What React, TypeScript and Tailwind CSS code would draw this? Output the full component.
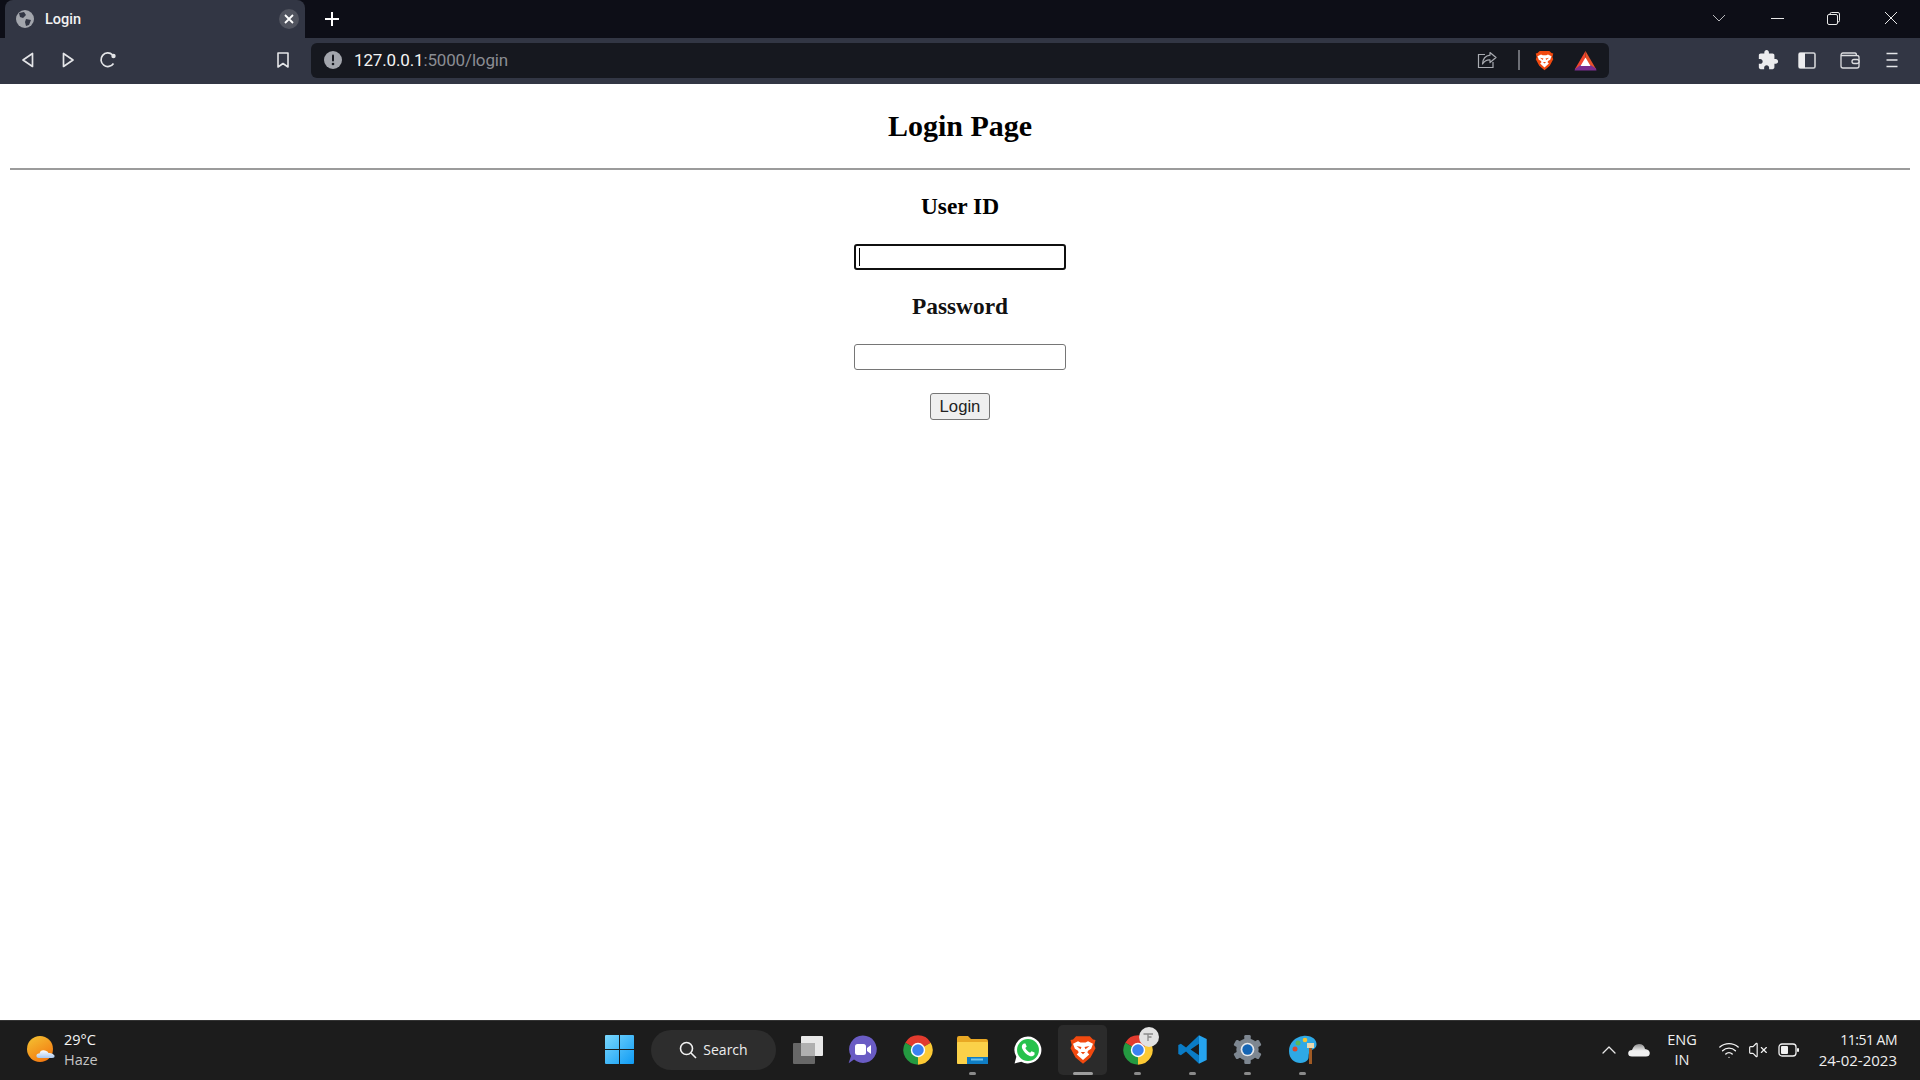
import React from "react";
import { ChevronUp, VolumeX, Wifi } from "lucide-react";

function Brave({ size }: { size: number }) {
  return (
    <svg width={size} height={size} viewBox="0 0 24 24">
      <path d="M6.5 1 H17.5 L20 3.5 L22 4 L21 8 L22 10.5 L18 18 L12 23 L6 18 L2 10.5 L3 8 L2 4 L4 3.5 Z" fill="#f1490f" />
      <path d="M4 7 L8 5 L10 6 H14 L16 5 L20 7 L18.5 11 L16 12.5 L15.5 14 L17 15.5 L12 20 L7 15.5 L8.5 14 L8 12.5 L5.5 11 Z" fill="#fff" />
      <path d="M6.8 8.8 L10.8 9.6 L10 11.4 Z M17.2 8.8 L13.2 9.6 L14 11.4 Z M10.2 13.6 H13.8 L12 15.4 Z" fill="#f1490f" />
    </svg>
  );
}

function Bat() {
  return (
    <svg width="23" height="21" viewBox="0 0 23 21">
      <path d="M11.5 1 L1 19 H6.5 L11.5 10 Z" fill="#f2452d" />
      <path d="M11.5 1 L22 19 H16.5 L11.5 10 Z" fill="#e8512a" />
      <path d="M1 19 L0.5 20.5 H22.5 L22 18.5 L16.5 15 H6.5 Z" fill="#7b2f8f" />
      <path d="M11.5 7.5 L16.5 16 H6.5 Z" fill="#fff" />
    </svg>
  );
}

function Chrome({ size }: { size: number }) {
  return (
    <svg width={size} height={size} viewBox="0 0 24 24">
      <path d="M12 12 L2.47 6.5 A11 11 0 0 1 21.53 6.5 Z" fill="#e33b2e" />
      <path d="M12 12 L21.53 6.5 A11 11 0 0 1 12 23 Z" fill="#fcc934" />
      <path d="M12 12 L12 23 A11 11 0 0 1 2.47 6.5 Z" fill="#249a41" />
      <circle cx="12" cy="12" r="5.4" fill="#fff" />
      <circle cx="12" cy="12" r="4.3" fill="#3b82f0" />
    </svg>
  );
}

function TaskIcon({ children, pill, active }: { children: React.ReactNode; pill?: boolean; active?: boolean }) {
  return (
    <div className="relative flex h-full w-[55px] items-center justify-center">
      {active && <div className="absolute left-[3px] top-[4px] h-[50px] w-[49px] rounded-[5px] bg-[#2b2b2b]" />}
      <div className="relative flex items-center justify-center">{children}</div>
      {pill && (
        <div className={`absolute top-[51px] h-[3px] rounded-full ${active ? "w-[20px] bg-[#9d9d9d]" : "w-[7px] bg-[#8a8a8a]"}`} />
      )}
    </div>
  );
}

export default function App() {
  return (
    <div className="flex h-[1080px] w-[1920px] flex-col overflow-hidden bg-white font-['Roboto',sans-serif]">
      {/* tab strip */}
      <div className="flex h-[38px] items-end bg-[#0d0e17] text-white">
        <div className="ml-[5px] flex h-[38px] w-[300px] items-center rounded-t-[8px] bg-[#323644] pl-[11px]">
          <svg width="18" height="18" viewBox="0 0 18 18">
            <circle cx="9" cy="9" r="9" fill="#a3a6ad" />
            <path d="M3 3 L8 2 L10 5 L7 8 L4 7 Z M10 9 L15 10 L13 15 L10 16 L9 12 Z" fill="#323644" />
          </svg>
          <span className="ml-[11px] pt-px text-[14.5px] font-medium text-[#f2f2f2]">Login</span>
          <div className="ml-auto mr-[6px] flex h-[20px] w-[20px] items-center justify-center rounded-full bg-[#51545f]">
            <svg width="10" height="10" viewBox="0 0 10 10">
              <path d="M1 1 L9 9 M9 1 L1 9" stroke="#fff" strokeWidth="1.8" />
            </svg>
          </div>
        </div>
        <div className="ml-[19px] flex h-[38px] w-[16px] items-center justify-center">
          <svg width="16" height="16" viewBox="0 0 16 16">
            <path d="M8 1 V15 M1 8 H15" stroke="#fff" strokeWidth="2" />
          </svg>
        </div>
        <div className="ml-auto flex h-[36px] items-center self-start">
          <svg width="14" height="8" viewBox="0 0 14 8" className="mr-[45px]">
            <path d="M1 1 L7 7 L13 1" stroke="#b8b8bc" fill="none" />
          </svg>
          <div className="mr-[43px] h-px w-[13px] bg-[#e8e8e8]" />
          <svg width="13" height="13" viewBox="0 0 13 13" className="mr-[44px]">
            <path d="M3 2.5 V2 Q3 0.5 4.5 0.5 H11 Q12.5 0.5 12.5 2 V8.5 Q12.5 10 11 10" stroke="#e8e8e8" fill="none" />
            <rect x="0.5" y="2.5" width="10" height="10" rx="1.5" stroke="#e8e8e8" fill="none" />
          </svg>
          <svg width="14" height="14" viewBox="0 0 14 14" className="mr-[22px]">
            <path d="M1 1 L13 13 M13 1 L1 13" stroke="#e8e8e8" />
          </svg>
        </div>
      </div>

      {/* toolbar */}
      <div className="flex h-[46px] items-center bg-[#323644] pb-[2px] pl-[18px]">
        <svg width="20" height="20" viewBox="0 0 20 20">
          <path d="M14.5 3.5 V16.5 L5 10 Z" fill="none" stroke="#e4e5e8" strokeWidth="1.7" strokeLinejoin="round" />
        </svg>
        <svg width="20" height="20" viewBox="0 0 20 20" className="ml-[20px]">
          <path d="M5.5 3.5 V16.5 L15 10 Z" fill="none" stroke="#e4e5e8" strokeWidth="1.7" strokeLinejoin="round" />
        </svg>
        <svg width="20" height="20" viewBox="0 0 20 20" className="ml-[20px]">
          <path d="M15.5 13.5 A6.8 6.8 0 1 1 14.5 4.8" fill="none" stroke="#e4e5e8" strokeWidth="1.7" />
          <circle cx="15.5" cy="6" r="2.2" fill="#e4e5e8" />
        </svg>
        <svg width="20" height="20" viewBox="0 0 20 20" className="ml-[155px]">
          <path d="M5 3 H15 V17 L10 13.5 L5 17 Z" fill="none" stroke="#e4e5e8" strokeWidth="1.6" strokeLinejoin="round" />
        </svg>

        <div className="ml-[18px] flex h-[35px] w-[1298px] items-center rounded-[6px] bg-[#16181f] pl-[13px] pr-[12px]">
          <svg width="18" height="18" viewBox="0 0 18 18">
            <circle cx="9" cy="9" r="9" fill="#a3a6ad" />
            <rect x="8" y="3.5" width="2" height="7" rx="1" fill="#16181f" />
            <circle cx="9" cy="13" r="1.3" fill="#16181f" />
          </svg>
          <span className="ml-[12px] pt-[2px] text-[17px] tracking-[-0.15px] text-[#f4f4f4]">
            127.0.0.1<span className="text-[#8b8d93]">:5000/login</span>
          </span>
          <svg width="20" height="20" viewBox="0 0 20 20" className="ml-auto">
            <path d="M8 4.5 H1.5 V17.5 H16 V12" fill="none" stroke="#a9abb1" strokeWidth="1.2" />
            <path d="M13 2.5 L19 7.5 L13 12.5 V9.8 Q8 9.5 5.5 14 Q6 6 13 5.2 Z" fill="none" stroke="#a9abb1" strokeWidth="1.2" strokeLinejoin="round" />
          </svg>
          <div className="ml-[21px] h-[20px] w-[2px] bg-[#6d6f76]" />
          <div className="ml-[14px]">
            <Brave size={21} />
          </div>
          <div className="ml-[19px]">
            <Bat />
          </div>
        </div>

        <svg width="22" height="22" viewBox="0 0 24 24" className="ml-[148px]">
          <path
            d="M20.5 11H19V7c0-1.1-.9-2-2-2h-4V3.5C13 2.12 11.88 1 10.5 1S8 2.12 8 3.5V5H4c-1.1 0-1.99.9-1.99 2v3.8H3.5c1.49 0 2.7 1.21 2.7 2.7s-1.21 2.7-2.7 2.7H2V20c0 1.1.9 2 2 2h3.8v-1.5c0-1.49 1.21-2.7 2.7-2.7 1.49 0 2.7 1.21 2.7 2.7V22H17c1.1 0 2-.9 2-2v-4h1.5c1.38 0 2.5-1.12 2.5-2.5S21.88 11 20.5 11z"
            fill="#ececee"
          />
        </svg>
        <svg width="18" height="17" viewBox="0 0 18 17" className="ml-[19px]">
          <rect x="1" y="1" width="16" height="15" rx="1.5" fill="none" stroke="#d4d5d8" strokeWidth="1.6" />
          <rect x="1" y="1" width="6" height="15" fill="#ececee" />
        </svg>
        <svg width="20" height="17" viewBox="0 0 20 17" className="ml-[24px]">
          <path d="M3 1 H15 Q16.5 1 16.5 3.5 M1 3.5 Q1 1 3 1 M1 3.5 V14 Q1 16 3 16 H17 Q19 16 19 14 V5.5 Q19 3.5 17 3.5 H1" fill="none" stroke="#dcdde0" strokeWidth="1.3" />
          <rect x="12" y="7.5" width="7" height="4" rx="2" fill="#323644" stroke="#dcdde0" strokeWidth="1.3" />
        </svg>
        <svg width="12" height="16" viewBox="0 0 12 16" className="ml-[26px]">
          <path d="M0.5 1.5 H11.5 M0.5 8 H11.5 M0.5 14.5 H11.5" stroke="#e4e5e8" strokeWidth="1.5" />
        </svg>
      </div>

      {/* page */}
      <main className="flex flex-1 flex-col items-center px-[10px] font-['Liberation_Serif',serif] text-black">
        <h1 className="mt-[25px] h-[34px] text-center text-[30px] font-bold leading-[34px]">Login Page</h1>
        <hr className="mt-[25px] h-[2px] w-full border-0 bg-[#9b9b9b]" />
        <h3 className="mt-[25px] h-[24px] text-center text-[23.4px] font-bold leading-[22px]">User ID</h3>
        <div className="relative mt-[25px]">
          <input className="block h-[26px] w-[212px] rounded-[3px] border-2 border-[#101010] bg-white outline-none" />
          <div className="absolute left-[5px] top-[4px] h-[18px] w-px bg-black" />
        </div>
        <h3 className="mt-[25px] h-[24px] text-center text-[23.4px] font-bold leading-[22px] text-[#111]">Password</h3>
        <input type="password" className="mt-[25px] block h-[26px] w-[212px] rounded-[3px] border border-[#767676] bg-white outline-none" />
        <button className="mt-[23px] h-[27px] w-[60px] rounded-[3px] border border-[#767676] bg-[#efefef] pt-px font-['Liberation_Sans',sans-serif] text-[16.67px] leading-none text-[#222]">
          Login
        </button>
      </main>

      {/* taskbar */}
      <div className="flex h-[60px] items-center border-t border-[#333333] bg-[#1c1c1c] pb-[2px] font-['Open_Sans',sans-serif] text-white">
        <div className="flex h-full w-[591px] items-center pl-[27px]">
          <svg width="28" height="28" viewBox="0 0 28 28">
            <defs>
              <linearGradient id="sun" x1="0.2" y1="0" x2="0.8" y2="1">
                <stop offset="0" stopColor="#f4be30" />
                <stop offset="1" stopColor="#f3740f" />
              </linearGradient>
              <linearGradient id="wcl" x1="0" y1="0" x2="0" y2="1">
                <stop offset="0" stopColor="#ffffff" />
                <stop offset="1" stopColor="#a9c8f0" />
              </linearGradient>
            </defs>
            <circle cx="13" cy="13" r="13" fill="url(#sun)" />
            <path d="M12 22 Q9 22 9.5 19 Q10 17 12.5 17.5 Q13.5 13.5 18 14.5 Q21 15 21.5 17 Q26 16.5 27.5 19.5 Q28 22 25 22 Z" fill="url(#wcl)" />
          </svg>
          <div className="ml-[9px] flex flex-col text-[14.5px] leading-[20px]">
            <span className="text-[#f4f4f4]">29°C</span>
            <span className="text-[#c4c4c4]">Haze</span>
          </div>
        </div>

        <div className="flex h-full w-[56px] items-center justify-center">
          <svg width="29" height="29" viewBox="0 0 29 29">
            <defs>
              <linearGradient id="win" x1="0" y1="0" x2="1" y2="1">
                <stop offset="0" stopColor="#7ad7fd" />
                <stop offset="1" stopColor="#0f9bf4" />
              </linearGradient>
            </defs>
            <path d="M1 0 H14 V14 H0 V1 Q0 0 1 0 Z M15 0 H28 Q29 0 29 1 V14 H15 Z M0 15 H14 V29 H1 Q0 29 0 28 Z M15 15 H29 V28 Q29 29 28 29 H15 Z" fill="url(#win)" />
          </svg>
        </div>

        <div className="ml-[4px] flex h-[40px] w-[125px] items-center justify-center rounded-full bg-[#2d2d2d]">
          <svg width="18" height="18" viewBox="0 0 18 18">
            <circle cx="7.5" cy="7.5" r="6" fill="none" stroke="#f2f2f2" strokeWidth="1.6" />
            <path d="M12 12 L17 17" stroke="#f2f2f2" strokeWidth="1.6" />
          </svg>
          <span className="ml-[6px] text-[14px] text-[#ededed]">Search</span>
        </div>

        <div className="ml-[4px] flex h-full items-center">
          <TaskIcon>
            <svg width="30" height="28" viewBox="0 0 30 28">
              <rect x="8" y="0" width="22" height="20" rx="1" fill="#e8e8e8" />
              <rect x="0" y="7" width="22" height="21" rx="1" fill="#6e6e6e" opacity="0.92" />
              <rect x="8" y="7" width="14" height="13" fill="#b0b0b0" />
            </svg>
          </TaskIcon>
          <TaskIcon>
            <svg width="29" height="29" viewBox="0 0 29 29">
              <path d="M15 0.5 A13.7 13.7 0 1 1 6 24.5 L1 28 Q0.5 28.5 1 27 L3 21 A13.7 13.7 0 0 1 15 0.5 Z" fill="#6a5cc4" />
              <rect x="7" y="9" width="11" height="11" rx="2.5" fill="#fff" />
              <path d="M19 13 L23 10 V19 L19 16 Z" fill="#fff" />
            </svg>
          </TaskIcon>
          <TaskIcon>
            <Chrome size={32} />
          </TaskIcon>
          <TaskIcon pill>
            <svg width="31" height="28" viewBox="0 0 31 28">
              <path d="M0 2 Q0 0 2 0 H11 L14 3 H29 Q31 3 31 5 V27 Q31 28 29 28 H2 Q0 28 0 26 Z" fill="#e9a824" />
              <rect x="0" y="6" width="31" height="22" rx="1" fill="#fbd149" />
              <path d="M10 28 V21 H31 V28 Z" fill="#0f7dc4" />
              <rect x="14" y="22.5" width="12" height="2" fill="#6fc3ee" />
            </svg>
          </TaskIcon>
          <TaskIcon>
            <svg width="28" height="28" viewBox="0 0 24 24">
              <path d="M12 0.5 A11.5 11.5 0 1 1 6.3 22 L0.5 23.5 L2 17.8 A11.5 11.5 0 0 1 12 0.5 Z" fill="#fff" />
              <circle cx="12" cy="12" r="9.4" fill="#27c24c" />
              <path d="M8.5 6.5 C7 7 6.3 9 7 10.8 C8.2 13.6 10.5 16 13.5 17.2 C15.2 17.8 17 17 17.6 15.8 L17.6 14.2 L15 13 L13.8 14.4 C12.3 13.8 10.4 11.9 9.7 10.3 L10.9 9 L9.8 6.5 Z" fill="#fff" />
            </svg>
          </TaskIcon>
          <TaskIcon pill active>
            <Brave size={30} />
          </TaskIcon>
          <TaskIcon pill>
            <div className="relative">
              <Chrome size={32} />
              <div className="absolute -right-[5px] -top-[7px] flex h-[20px] w-[20px] items-center justify-center rounded-full bg-[#e2e2e2]">
                <svg width="11" height="11" viewBox="0 0 11 11">
                  <path d="M0.5 3 H10 M5 3 V10 M5 6 H8.5" stroke="#8a8a8a" strokeWidth="1.3" fill="none" />
                </svg>
              </div>
            </div>
          </TaskIcon>
          <TaskIcon pill>
            <svg width="31" height="31" viewBox="0 0 24 24">
              <path d="M17 1 L7 10.5 L3 7.5 L1 8.5 V15.5 L3 16.5 L7 13.5 L17 23 L17 16.5 L10.5 12 L17 7.5 Z" fill="#0a7cc6" />
              <path d="M17 1 L23 3.8 V20.2 L17 23 Z" fill="#25a3ee" />
            </svg>
          </TaskIcon>
          <TaskIcon pill>
            <svg width="31" height="31" viewBox="0 0 24 24">
              <g fill="#7e8791">
                <rect x="9.5" y="0.8" width="5" height="22.4" rx="1" />
                <rect x="9.5" y="0.8" width="5" height="22.4" rx="1" transform="rotate(60 12 12)" />
                <rect x="9.5" y="0.8" width="5" height="22.4" rx="1" transform="rotate(120 12 12)" />
                <circle cx="12" cy="12" r="8.6" />
              </g>
              <circle cx="12" cy="12" r="5.3" fill="#e6e8ec" />
              <circle cx="12" cy="12" r="4" fill="#1565b4" />
            </svg>
          </TaskIcon>
          <TaskIcon pill>
            <svg width="30" height="30" viewBox="0 0 30 30">
              <path d="M15 1 C24 0 29 5 28.5 10 C28 15 22 14 21 18 C20 22 22 24 17 27 C10 30 1 26 1 16 C1 8 7 2 15 1 Z" fill="#2ea9e6" />
              <circle cx="7" cy="14" r="2.5" fill="#d9472f" />
              <circle cx="10" cy="8" r="2.5" fill="#5cb85c" />
              <circle cx="17" cy="5" r="2.3" fill="#f4c430" />
              <rect x="21" y="13" width="3" height="16" fill="#a05a24" />
              <rect x="19" y="8" width="7" height="5" fill="#e8d9b0" />
            </svg>
          </TaskIcon>
        </div>

        <div className="ml-auto flex h-full items-center pr-[23px]">
          <ChevronUp size={24} strokeWidth={1.3} className="text-[#e8e8e8]" />
          <svg width="22" height="14" viewBox="0 0 22 14" className="ml-[7px]">
            <defs>
              <linearGradient id="od" x1="0" y1="0" x2="0" y2="1">
                <stop offset="0" stopColor="#8e8e8e" />
                <stop offset="0.55" stopColor="#f0f0f0" />
              </linearGradient>
            </defs>
            <path d="M4 13.5 Q0 13.5 0.2 10 Q0.5 7 4 7 Q6 1 11 1 Q16 1 17 6 Q21.5 6.5 21.8 10 Q21.8 13.5 18 13.5 Z" fill="url(#od)" />
          </svg>
          <div className="ml-[15px] flex w-[34px] flex-col items-center text-[14.5px] leading-[20px] text-[#efefef]">
            <span>ENG</span>
            <span>IN</span>
          </div>
          <Wifi size={22} strokeWidth={1.5} className="ml-[19px] text-[#f2f2f2]" />
          <VolumeX size={20} strokeWidth={1.4} className="ml-[8px] text-[#f2f2f2]" />
          <svg width="22" height="14" viewBox="0 0 22 14" className="ml-[10px]">
            <rect x="1" y="1" width="17" height="12" rx="3" fill="none" stroke="#f2f2f2" strokeWidth="1.3" />
            <rect x="3" y="3" width="7" height="8" rx="1" fill="#f2f2f2" />
            <rect x="19" y="5" width="2" height="4" rx="1" fill="#f2f2f2" />
          </svg>
          <div className="ml-[17px] flex w-[80px] flex-col items-end whitespace-nowrap text-[15px] leading-[20px] text-[#efefef]">
            <span className="text-[14px] tracking-[-0.5px]">11:51 AM</span>
            <span>24-02-2023</span>
          </div>
        </div>
      </div>
    </div>
  );
}
